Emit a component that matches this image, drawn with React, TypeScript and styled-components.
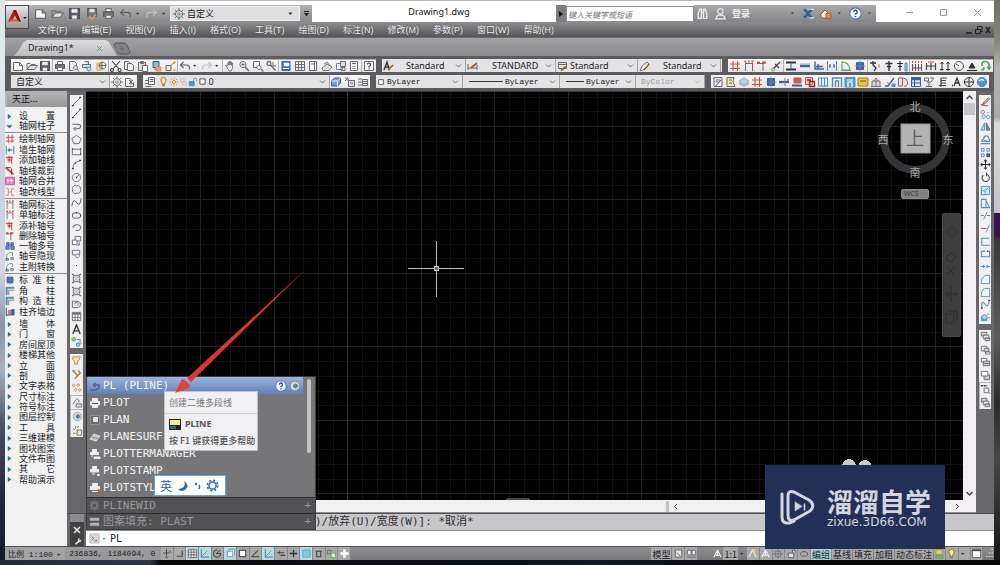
import React, { ReactNode } from "react";
import styled, { createGlobalStyle, css } from "styled-components";

const UI = `"Noto Sans", "Noto Sans CJK SC", sans-serif`;
const CJK = `"Noto Sans CJK SC", "Noto Sans", sans-serif`;
const MENU = `"Liberation Sans", "Noto Sans CJK SC", sans-serif`;
const MONO = `"DejaVu Sans Mono", "Noto Sans CJK SC", monospace`;

const GlobalStyle = createGlobalStyle`
  * { box-sizing: border-box; }
  body { margin: 0; background: #07080b; font-family: ${UI}; font-size: 9px; color: #222; overflow: hidden; }
  button, input, select { font: inherit; color: inherit; margin: 0; padding: 0; border: 0; background: none; }
  button { cursor: pointer; }
`;

/* ---------- icon drawings, all on a 12 x 12 grid ---------- */

const K = "#6a6a6e";
const B = "#4f8fb6";
const R = "#cc4f48";
const N = "#3f5f98";
const G = "#5aa65a";
const Y = "#d9a13a";

const p = (d: string, stroke = K, fill = "none", w = 1) => (
  <path key={d + stroke} d={d} stroke={stroke} fill={fill} strokeWidth={w} />
);

const drawings: Record<string, ReactNode> = {
  page: p("M1.5 2.5h6l3 3v5h-9zM7.5 2.5v3h3", "#666", "#f6f6f6"),
  open: [p("M1 9.5v-6h3l1 1h4v1.5"), p("M1 9.5l3-4h7.5l-3 4z", K, "#e2e2e4")],
  save: [p("M1.5 1.5h9v9h-9z", "#4a4a55", "#5b5f6e"), p("M3.5 2h5v3h-5zM4 8h4v2.5h-4z", "#eee", "#eee", 0.5)],
  saveas: [p("M2.5 1.5h8v7h-8z", "#555", "#777b88"), p("M4.5 2h4v2.5h-4z", "#eee", "#eee", 0.5), p("M4 8l2 3 4-4", Y, "none", 1.6)],
  print: [p("M3.5 1.5h5v3h-5z", K, "#fff"), p("M1.5 4.5h9v4h-9z", "#555", "#777"), p("M3.5 7.5h5v3h-5z", K, "#fff")],
  printPale: [p("M3.5 1.5h5v3h-5z", "#eee", "#eee"), p("M1.5 4.5h9v3.5h-9z", "#eee", "#eee"), p("M3 6.5h6", "#555"), p("M3.5 8.5h5v2h-5z", "#eee", "#eee")],
  preview: [p("M1.5 1.5h5l2 2v3M1.5 1.5v9h4"), p("M7.5 5.5a2 2 0 1 1-.1 0M9 9l2 2.5")],
  publish: [p("M3.5 1.5h4v3M1.5 4.5h8v3h-8z", K, "#ddd"), p("M8 7a2 2 0 1 1-.1 0", B, "#cfe2ee")],
  globe: [p("M2 3h4v7h-4z", Y, "#f0e2bd"), p("M7.5 2a3.5 3.5 0 1 1-.1 0M7 2v7M4 5.5h7")],
  cut: p("M2 1l7 8M10 1l-7 8M2 8.5a1.5 1.5 0 1 0 .1 0M9.5 8.5a1.5 1.5 0 1 0 .1 0", "#444", "none", 1.1),
  copy: [p("M1.5 1.5h4l2 2v6h-6z"), p("M4.5 3.5h4l2 2v5h-6z", K, "#f4f4f4")],
  paste: [p("M1.5 2.5h7v8h-7zM3.5 1.5h3v2h-3z", K, "#ddd"), p("M5.5 5.5h5v6h-5z", K, "#fff")],
  match: [p("M2 1.5h6v6h-6z", N, "#9fb4cf"), p("M5 7h5v4h-5z", Y, "#dca65a"), p("M3 9h2")],
  block: [p("M1 10.5v-5h5v5zM6 5.5l3-3", K, "#f2e8d0"), p("M8 2.5l3 0M9.5 1v3M8 10h3", Y)],
  undo: p("M4.5 2L1.5 5l3 3M2 5h5.5q3 0 3 3v1.5", "#5c5c60", "none", 1.1),
  redo: p("M7.5 2l3 3-3 3M10 5H4.5q-3 0-3 3v1.5", "#c2c2c4", "none", 1.1),
  down: p("M2 4.5h4l-2 2.5z", "#333", "#333", 0.4),
  hand: p("M3 7L1.5 5.5l1-.5L4 6V2.5h1V5 1.5h1.2V5 2h1.2v3.5V3h1.2v5l-1.5 3H5z", K, "#fff", 0.9),
  zoom: [p("M5 1.5a3 3 0 1 1-.1 0M3.5 4.5h3M5 3v3"), p("M7 7l4 4", K, "none", 1.6)],
  zoomwin: [p("M1.5 1.5h6v6h-6z"), p("M7 5.5a2 2 0 1 1-.1 0", K, "#fff"), p("M9 9l2.5 2.5", K, "none", 1.3)],
  zoomprev: [p("M4 1.5a2 2 0 1 1-.1 0M5.5 5l5 5.5", K, "none", 1.3), p("M8 2v4h3")],
  props: [p("M2 1.5h8v9h-8z", N, "#3f6da3"), p("M4 3h5v3h-5z", "#fff", "#fff", 0.6), p("M3 8.5h6", "#fff")],
  grid4: [p("M1.5 1.5h9v9h-9z", K, "#eee"), p("M4.5 1.5v9M7.5 1.5v9M1.5 4.5h9M1.5 7.5h9")],
  palette: [p("M2.5 1.5h7v9h-7z", K, "#fff"), p("M4 4h4M7.5 2v8")],
  sheet: p("M1 8l5-4 5 3-3 3.5H2zM3 4l3-2 3 4", K, "#ddd", 0.9),
  markup: [p("M1.5 3.5h6v6h-6z", B, "#fff"), p("M5.5 1.5h5v5h-5z", K, "#ddd"), p("M6 7.5h4v3H6z")],
  calc: [p("M2.5 1.5h7v9h-7z", K, "#fff"), p("M4 3.5h4", K, "none", 1.4), p("M4 6.5h4M4 8.5h4", K, "none", 0.7)],
  help: [p("M1.5 1.5h9v9h-9z", K, "#fff"), p("M4.5 4.5q0-1.5 1.5-1.5t1.5 1.5-1.5 2V7.5M6 8.5v1", "#333", "none", 1.2)],
  textstyle: [p("M1 10l3-8 2.5 8M2 7h4", "#333", "none", 1.4), p("M5 10l5-5", "#8a6428", "none", 1.7)],
  dimstyle: [p("M1 10V4M1 8h9M10 10V5", K), p("M4 8l6-5", "#a5562c", "none", 1.7)],
  tablestyle: [p("M1.5 2.5h8v6h-8zM1.5 4.5h8"), p("M4 10.5l5-4", "#8a6428", "none", 1.8)],
  leader: [p("M1 11l2-5 5-4 2 2-4 5z", K, "#eee", 0.9), p("M5 10l5-6", "#8a6428", "none", 1.4)],
  gear: [p("M6 2.5a3.5 3.5 0 1 1-.1 0M6 0v2.5M6 9.5V12M0 6h2.5M9.5 6H12M1.8 1.8l1.7 1.7M8.5 8.5l1.7 1.7M1.8 10.2l1.7-1.7M8.5 3.5l1.7-1.7"), p("M6 4.8a1.2 1.2 0 1 1-.1 0")],
  gearbox: [p("M1.5 2.5h5M1.5 2.5v8h8v-4", K), p("M5 4l4 4M9 4l-4 4M7 3v6", K)],
  layers: [p("M4.5 1.5h6v7h-6zM5.5 3.5h4M5.5 5.5h4", K, "#fff"), p("M1 4.5h3M1 7.5h3M1.5 10.5h6", K)],
  bulb: [p("M6 1.5a3 3 0 0 1 1.5 5.5v2h-3V7A3 3 0 0 1 6 1.5z", "#8a7430", "#ffe98a"), p("M4.5 10.5h3")],
  sun: [p("M6 4a2 2 0 1 1-.1 0", "#a8862b", "#ffe27a"), p("M6 1v1.5M6 9.5V11M1 6h1.5M9.5 6H11M2.5 2.5l1 1M8.5 8.5l1 1M2.5 9.5l1-1M8.5 3.5l1-1", "#a8862b")],
  vp: p("M2 2.5h5v4h-5zM5 6.5h5v4h-5z", "#bbb"),
  lock: [p("M1.5 5.5h6v5h-6z", B, "#4e93b8"), p("M6.5 5V3.5q0-2 2-2t2 2V5", B)],
  box: p("M2.5 2.5h7v7h-7z", "#222", "#fff"),
  stack: [p("M1.5 5l3-3h6v5l-3 3h-6z", N, "#7d9fc6"), p("M1.5 5h6v5M7.5 5l3-3", "#e7eef6")],
  stack2: [p("M4.5 4.5h6v6h-6z", K, "#ddd"), p("M1 2h3v3M4 2L1 5M6 7h3")],
  stack3: [p("M5.5 3.5h5v6h-5zM6 5.5h4M6 7.5h4"), p("M1 3h4M1 6h4M1 9h4")],
  hash: p("M4 1v10M8.5 1v10M1 4h10M1 8.5h10", R, "none", 1.1),
  axis1: [p("M2.5 3v8M9.5 3v8M2.5 3.5h7"), p("M1.5 1.5h2M8.5 1.5h2M5 1.5h1.5", R, "none", 1.8)],
  axis2: [p("M1 3.5h8M7 3.5V11"), p("M1 2.5h3M6 2.5h4", R, "none", 2)],
  trim: [p("M10 2L3 9M5 4l4 4", "#444", "none", 1.2), p("M3 8a1.5 1.5 0 1 1-.1 0", G, "#bfe0bf")],
  ibeam: [p("M1 2.5h10M1 9.5h10", "#333", "none", 1.8), p("M6 3v6", B, "none", 1.4)],
  wall: [p("M1 6h10", N, "none", 2.4), p("M1 4h10", "#aaa")],
  stairs: p("M2 1.5V9h9M3 6.5h7M5 4v5", N, "none", 1.4),
  doors: [p("M1.5 1v10M10.5 1v10", B), p("M3 6h2M7 6h2M4 4v4M8 4v4", N)],
  arcdoor: [p("M2 10V2q7 0 8 8z", G, "none", 1.1), p("M1 10.5h10", "#888")],
  column: [p("M2.5 2.5h7v7h-7z", N, "#4866a4"), p("M6 .5v11M.5 6h11", "#6f88b8", "none", 0.8)],
  dim1: [p("M1 3h6M4 1v4l3 3-2 3", "#333", "none", 1.3), p("M10 4v4", Y, "none", 1.3)],
  dim2: p("M6 1v10M2.5 3.5h7M4 6.5h4", "#333", "none", 1.4),
  dim3: [p("M4 1v10M1 3.5h6M2 6.5h4", "#333", "none", 1.2), p("M9 3v8h2V3z", B, "#a5cbe0")],
  rail: [p("M1.5 4v7M4.5 4v7M7.5 4v7M10.5 4v7M1 8h10", "#555"), p("M1.5 1v2M4.5 1v2M7.5 1v2M10.5 1v2", R, "none", 1.2)],
  arrows: [p("M1.5 3v7M6 3v7M10.5 3v7M1 6h10", "#444", "none", 1.2), p("M3 2h6", R)],
  arrows2: p("M3 2v9M9 2v9M1.5 4L3 2l1.5 2M7.5 4L9 2l1.5 2M1 9.5h3.5M7 9.5h4", "#333"),
  dial: p("M6 1.5a4.5 4.5 0 1 1-.1 0M6 6L3 4", "#555"),
  elev: [p("M3 8l3-5 3 5z", "#333", "#333"), p("M1 10.5h10", "#333", "none", 1.2)],
  loop: [p("M2 6V4q0-2.5 3-2.5t4 2.5v3", G, "none", 1.7), p("M7 7h4L9 10zM1 10h3V7", G, G)],
  doc: [p("M2 1.5h8v9h-8z", K, "#eef"), p("M3.5 4h5M3.5 6h3M3 11l6-7", K)],
  docy: [p("M2 1.5h7L8 6l2 4.5H2z", K, "#f5e7b4"), p("M4 4h3M4 7h3")],
  drum: [p("M1 5l5-3 5 3-5 3z", "#9ab4c6", "#c2d4e0"), p("M1 7l5 3 5-3", "#9aacb8", "none", 1.5)],
  tee: [p("M1 6h10", N, "none", 2.2), p("M7 2v8", B), p("M9 4h2", R, "none", 1.5)],
  redstack: [p("M3 2h7v5H3z", R, "#cf5c55"), p("M1 9.5h10", N, "none", 2)],
  redwin: [p("M1.5 1.5h7v7h-7z", R, "#f1c9c6"), p("M5.5 5.5h5v5h-5zM3 4h4", "#8c2620", "none", 1.3)],
  bluewin: p("M1.5 2v8.5M4.5 2v8.5M7.5 2v8.5M10.5 2v8.5M1 2h10M1 10h10", B, "#cfe4f0"),
  portal: p("M1.5 11V2h9v9M4.5 11V5h3v6", B, "none", 1.3),
  bluehouse: [p("M1 1.5h10v9.5H1z", B, "#57a5d0"), p("M4 11V6h4v5M3 4h6", "#fff", "none", 1.2)],
  yellow: [p("M1 2h10v8H1z", "#9a7c22", "#f0c745"), p("M3 5h6", "#6b571a")],
  gate: p("M1 10.5h10M2 10V5h8v5M4 5l2-3 2 3M6 5v5", "#7a6a66", "#ddd"),
  slope: [p("M1 10h3l6-8", N, "none", 1.5), p("M8 8h3v2.5H8z", B, B), p("M3 6l2 2", Y, "none", 1.5)],
  book: p("M1.5 2h4v8h-4zM6 2q4 0 4.5 4T7 10.5", K, "#f3dede"),
  table: [p("M1.5 1.5h9v9h-9z", N, "#d6e4f2"), p("M1.5 3h9", N, "none", 2.5), p("M4.5 3v7M1.5 7h9", N)],
  cup: [p("M1.5 2h4v3h-4zM7 2h4l-3 4H4M6 6v5M3 10.5h6", K)],
  efont: p("M4 11V2h6M4 4.5h5M4 7h5M2 9.5h7", "#444", "none", 1.2),
  adot: p("M2 9.5h1M4 10l3-8 3 8M5 7h4", "#333", "none", 1.3),
  target: p("M6 1.5a4.5 4.5 0 1 1-.1 0M6 1v10M1 6h10", "#333"),
  ball: [p("M6 1.5a4.5 4.5 0 1 1-.1 0", "#3b7cc0", "#4b94d9"), p("M3 5q3-3 5 0", "#fff", "none", 1.3)],
  line: [p("M2 10l8-8"), p("M1 10.5h2M9 1.5h2", "#333", "none", 1.2)],
  xline: [p("M2 10l8-8"), p("M1 10.5h2M5.5 6h1M9 1.5h2", "#333", "none", 1.6)],
  pline: [p("M1.5 3.5h6q3 0 3 2.5T7 8.5H4", K, "none", 1.1), p("M5 6.5L3 8.5l2 2", B, "none", 1.2)],
  plinePale: p("M1 10h5q5-1 4-5H5M6.5 3L4.5 5l2 2", "#4a628c", "none", 1.4),
  poly: p("M6 1.5l5 3.5-2 5.5H3L1 5z"),
  rect: [p("M1.5 3.5h9v6h-9z"), p("M1 3h1M10 9h1M10 3h1", "#333", "none", 1.6)],
  arc: [p("M2 11q0-8 8-9"), p("M1 10.5h2M4 4.5h1.5M9 1.5h2", "#333", "none", 1.6)],
  circle: [p("M6 1.5a4.5 4.5 0 1 1-.1 0M6 6l3-3"), p("M5.5 6h1", "#333", "none", 1.4)],
  cloud: p("M3 2q2-1.5 3 0 2-1.5 3.5.5Q11 4 10 5.5 11.5 7 10 9q-1.5 2-3.5.8Q4 11.5 2.5 9.5.5 8 2 6 .5 4 3 2z"),
  spline: p("M1 10q1-9 5-4t5-4.5", K, "none", 1.1),
  ellipse: [p("M6 3q4.5 0 4.5 3T6 9 1.5 6 6 3z", K, "none", 1.1), p("M5.5 3h1M10 6h1", "#333", "none", 1.4)],
  earc: p("M2 6Q3 2.5 7 3t3.5 3.5Q10 10 5 9", K, "none", 1.1),
  insert: [p("M4.5 1.5h6v5h-6z"), p("M1.5 5.5h5v5h-5z", K, "#fff"), p("M9 8v3H7", N)],
  mkblock: [p("M1.5 2.5h8v5h-8z"), p("M7 6.5a2 2 0 1 1-.1 0", K, "#fff")],
  point: p("M5.5 6h1", "#222", "none", 1.2),
  hatch: [p("M2.5 2.5h7v7h-7z", K, "#e0e0e3"), p("M1 1.5h2M9 1.5h2M1 10.5h2M9 10.5h2", K, "none", 1.6), p("M3 9l6-6M3 6l3-3M6 9l3-3", "#a2a2a6")],
  region: p("M1.5 3.5h5q4 0 4 3.5T7 10.5H1.5zM4 7a2 2 0 1 1 3 1.5"),
  tbl: [p("M1.5 1.5h9v9h-9z", K, "#fff"), p("M1.5 3h9", K, "none", 1.8), p("M4.5 3v8M7.5 3v8M1.5 7h9")],
  bigA: p("M2 11L6 1l4 10M3.5 7.5h5", "#333", "none", 1.5),
  add: [p("M3 1.5a2 2 0 1 1-.1 0", G, "#8fce8f"), p("M6 4h4v3M8 7l2 2 2-2", K), p("M6 8h3v3H6z", B, "#a9cfe6")],
  flash: [p("M2 2h6q3 3-1 5v3H4V7Q1 5 2 2z", "#b88440", "#fbe3a5"), p("M9 1l2 2", R)],
  flash2: [p("M2 2l6 6M8 1.5l2 3-6 6", "#b07a30", "none", 1.5), p("M1 2h4", B)],
  dots: p("M3 2.5a1.3 1.3 0 1 1-.1 0M8 2a1.3 1.3 0 1 1-.1 0M5 7a1.3 1.3 0 1 1-.1 0M9.5 7.5a1.3 1.3 0 1 1-.1 0", "#b87a3a"),
  lockcurve: [p("M1 8q4-8 6-5M7.5 3v3"), p("M4.5 7.5h6v3.5h-6z", K, "#ddd")],
  eye: [p("M6 1.5a4.5 4.5 0 1 1-.1 0", "#999", "#ddd"), p("M6.5 4a2 2 0 1 1-.1 0", "#4f7b8e", "#5b8c9f")],
  rays: [p("M5.5 5.5h5v5.5h-5z", K, "#f6f0c0"), p("M4 1v3M1 4l2 1M7 1L6 3.5M1 9h3")],
  pen: [p("M2 10.5h7M3 8l6-6 1.5 1L6 8z", K, "#e7b05d"), p("M1 9.5h4", R, "none", 1.4)],
  copyobj: [p("M3 1.5a1.8 1.8 0 1 1-.1 0M8 4h1", K), p("M4 6.5a1.8 1.8 0 1 1-.1 0M9 7a1.8 1.8 0 1 1-.1 0", B)],
  mirror: [p("M5 2v8H1z", B, "#b8d6e6"), p("M7 2v8h4z", K, "#5f97b6")],
  offset: p("M1 10.5h10M2 8q0-2 2-2.5Q4 2 7 2t2.5 3.5Q11 6 10.5 8zM4.5 7.5h3", B, "none", 1.3),
  array: [p("M1.5 1.5h3v3h-3zM7.5 1.5h3v3h-3zM1.5 7.5h3v3h-3z", B), p("M7.5 7.5h3v3h-3z", "#333", B)],
  move: p("M6 1v10M1 6h10M4.5 2.5L6 1l1.5 1.5M4.5 9.5L6 11l1.5-1.5M2.5 4.5L1 6l1.5 1.5M9.5 4.5L11 6 9.5 7.5", "#333", "none", 1.1),
  rotate: p("M7 2.5A4 4 0 1 1 3.5 3.5M7 .5v4", "#444", "none", 1.1),
  scale: [p("M1.5 1.5h9v9h-9z", B, "#cfe6f2"), p("M1.5 6.5h4v4h-4z", B, "#fff"), p("M6 6l3-3", K)],
  stretch: p("M1.5 1.5h5v9h-5zM6.5 3l4 7.5h-4M8 10h3", B, "#eaf4f9", 1.1),
  trimline: [p("M1 6h3M7.5 6H11", K), p("M4 10l4-8", B)],
  extend: [p("M1 6h6", K), p("M7 10l3-8", B)],
  brk: p("M10 2.5H2V10h8.5", B, "none", 1.1),
  brk2: [p("M4 3.5H1.5v6h9v-6H8", B, "none", 1.1), p("M4 3.5h1M7.5 3.5h1", "#333", "none", 1.6)],
  join: p("M1 6h4M7 6h4M3.5 4.5L5 6 3.5 7.5M8.5 4.5L7 6l1.5 1.5", B, "none", 1.1),
  chamfer: p("M1.5 10.5V6l4-4.5h5v9z", B, "#eef6fa"),
  fillet: p("M1.5 10.5V8q0-6.5 6-6.5h3v9z", B, "#eef6fa"),
  blend: [p("M2 10V5q1-3 4 1t4-4", B, "none", 1.2), p("M1 10h2M9 1.5h2", "#333", "none", 1.2)],
  explode: [p("M1.5 5.5h6v4h-6z", B, "#6ea9c8"), p("M5 3a3 2.5 0 1 1-.1 0M8 3l2-1M9 6h2", B, "#b7d5e5")],
  order1: [p("M1.5 1.5h6v4h-6z", K, "#ccc"), p("M3.5 4.5h6v4h-6zM5.5 7.5h5v3h-5z", K, "#eee")],
  order2: [p("M1.5 2.5h6v5h-6zM6 8.5h5v2.5H6z", K, "#fff"), p("M4.5 4.5h5v4h-5z", K, "#ccc")],
  order3: [p("M1.5 1.5h6v4h-6z", K, "#fff"), p("M3.5 4.5h7v5h-7z", K, "#ccc"), p("M4 7h6")],
  order4: [p("M4.5 5.5h6v5h-6z", K, "#ccc"), p("M1.5 1.5h7v5h-7z", K, "#fff")],
  order5: [p("M1 2h2M4 2h2M7 2h1", "#333", "none", 1.6), p("M4.5 4.5h5v5h-5zM10 10h1.5", K)],
  person: [p("M6 1.5a2.5 2.5 0 1 1-.1 0", "#eee", "none", 1.1), p("M1.5 11q1-3 3-3.5h3q2 .5 3 3.5z", "#eee", "none", 1.1)],
  binoc: p("M2 10.5V6l1.5-4h1.5v8.5zM7 10.5V2h1.5L10 6v4.5zM5 5h2", "#eee", "none", 1.2),
  exchange: [p("M2 2l7 8M9 2L2 10", "#2d5ca0", "none", 2.2), p("M7 2h4M7 10h4", "#eef", "none", 1)],
  cloudlock: [p("M1 10V6l4-4 3 3v5z", "#8a5a30", "#eee"), p("M6 5.5h5v5H6z", "#b55c1e", "#ea8f3a")],
  question: [p("M6 .8a5.2 5.2 0 1 1-.1 0", "#5578a8", "#f4f8fc"), p("M4.5 4.7q0-1.7 1.5-1.7t1.5 1.5-1.5 2V7.2M6 8.2v1.3", "#2c5284", "none", 1.3)],
  wcut: [p("M1 2l9 8", R, "none", 2.4), p("M1 2h6M8 3v7", "#333", "none", 1.1)],
  merge: [p("M.5 1.5h11v9H.5z", "#d04b98", "#e07ab5"), p("M3.5 3v6M7.5 3v6M2 5.5h8", "#fff")],
  retype: p("M1 2h3v8H1M11 2H8v8h3M4 6h4", "#c98480", "none", 1.1),
  walls: [p("M1.5 1v10M10.5 1v10", B, "none", 1.2), p("M3 6h6M5 4v4", "#333")],
  addaxis: [p("M1 3h8M3 6h5", R, "none", 1.6), p("M5 1v8M8 2v9", "#8c4240")],
  blues: p("M2 2h3v3H2zM7 2h3v3H7zM1 6h4v4H1zM7 6h4v4H7zM3 5h6", N, "#6a8fd0"),
  node: [p("M2 11V5l3-3h4v4", G, "none", 1.1), p("M1 9h3v2H1zM7 8h3v2H7z", N)],
  corner: [p("M2 11V2h9", B, "none", 2.4), p("M4.5 11V5h6.5", K)],
  align: [p("M1.5 1v10M1 9.5h10", N, "none", 1.4), p("M4 4h3v4H4z", R, "#e09090"), p("M8 3h3v6H8z", N, N)],
  tri: p("M4 3l4 3-4 3z", "#1f6f96", "#1f6f96", 0.5),
  tridown: p("M2.5 4.5h7L6 8z", "#1f6f96", "#1f6f96", 0.5),
  surf: [p("M1 8l4-5 6 2-4 5z", "#ddd", "#c4c4c6"), p("M3 6l6 2", "#888")],
  plan: [p("M1.5 1.5h9v9h-9z", "#8e8e90", "#6b6b6d"), p("M4.5 3.5h4v4h-4z", "#e6e6e6", "#e6e6e6")],
  plotmgr: [p("M3.5 1.5h4v2h-4zM1.5 4.5h8v2h-8z", "#eee", "#eee"), p("M5 9h6v1.5H5zM2 8h2", "#eee", "#eee")],
  stamp: [p("M3.5 1.5h4v2h-4zM1.5 4.5h8v2.5h-8z", "#eee", "#eee"), p("M8.5 9.5h2v1h-2zM3 9h3", "#eee", "#eee")],
  stylep: [p("M3.5 1.5h5v2h-5zM1.5 4.5h9v3h-9zM3 9.5h6", "#eee", "#eee"), p("M9 7l2 3", "#d2691e", "none", 1.8)],
  gearPale: p("M6 3a3 3 0 1 1-.1 0M6 .5v2M6 9.5v2M.5 6h2M9.5 6h2M2 2l1.5 1.5M8.5 8.5L10 10M2 10l1.5-1.5M8.5 3.5L10 2", "#7b7b7d", "none", 1.6),
  bars: p("M1 3.5h10M1 9h10", "#b4b4b6", "none", 3.4),
  snap: p("M6 1v8M2.5 5.5h7M4 9l2 2 2-2M9 3l2 2", "#444"),
  ortho: p("M3 9h6V3", "#444", "none", 1.1),
  polar: p("M6 2a4 4 0 1 0 3.5 4H5l4-4", "#444", "none", 1.1),
  osnap: p("M2.5 3.5h6v6h-6zM4 1.5h6.5V8", B, "#fff"),
  angle: p("M9 2L2 9.5h8", "#444", "none", 1.1),
  ucs: [p("M2.5 1v9H11", B, "none", 1.2), p("M3 9l6-6", G)],
  plus: p("M6 2v8M2 6h8", "#333", "none", 1.4),
  lwt: [p("M2 5h8", "#444", "none", 1), p("M6 8h5", "#444", "none", 1.6), p("M5 3v4", "#444")],
  sq: p("M4 3.5h4.5v6H4zM3 3.5h6.5", "#444", "none", 1.1),
  fillsq: p("M2 2h8v8H2z", "#58a9c9", "#85c9e2"),
  sel: [p("M1.5 2.5h4v4h-4z"), p("M5.5 5.5h5v5h-5z", G, "#d9ecd9")],
  cross: p("M6 1.5v9M1.5 6h9", "#fff", "none", 2.6),
  anno: p("M6 2L2 10M6 2l4 8M6 2v6M4 8h4", "#eee", "none", 1.2),
  annoY: [p("M6 2L2 10M6 2l4 8", "#eee", "none", 1.2), p("M8 1v5", "#f0d060", "none", 2)],
  layoutA: [p("M2.5 2h7v8h-7z", K, "#ddd"), p("M4 5l4 4", K)],
  layoutB: p("M1.5 2.5h4v5h-4zM6.5 2.5h4v5h-4zM1 10h10", K, "#eee"),
  unlock: p("M2.5 5.5h6v5h-6zM7 5V2.5h3V5", "#555", "#ddd"),
  flag: [p("M2 2h7v5H2z", "#b8902c", "#eacb64"), p("M2 8h8v3H2z", G, "#6fae9e")],
  win: [p("M1.5 1.5h9v9h-9z", "#555", "#fff"), p("M1.5 2.5h9", "#555", "none", 2)],
  resize: p("M10 2v1M10 6v1M7 6v1M10 10v1M7 10v1M4 10v1", "#eee", "none", 1.6),
  wrench: p("M3 9l4-4q-1-3 2-3l-1 2 1 1 2-1q0 3-3 2.5L4.5 10z", "#eee", "#eee", 0.5),
  prompt: [p("M1 1h10v10H1z", "#bbb", "#d6d6d8"), p("M3 4l2 2-2 2M6 8.5h3", "#666")],
};

const Svg = styled.svg<{ $s: number }>`
  display: block;
  flex: none;
  width: ${(q) => q.$s}px;
  height: ${(q) => q.$s}px;
`;

const Icon = ({ name, s = 12 }: { name: string; s?: number }) => (
  <Svg $s={s} viewBox="0 0 12 12" aria-hidden="true">
    {drawings[name]}
  </Svg>
);

/* ---------- shell ---------- */

const Desktop = styled.div`
  min-height: 100vh;
  display: grid;
  grid-template: 1fr 5px / 5px minmax(0, 1fr) 6px;
  background: #08090c;
`;
const LeftEdge = styled.div`
  background: linear-gradient(#d9e6ea 0, #e2ecee 12%, #c9cfdb 30%, #d2d8e4 48%, #8b93a3 58%, #a9b0be 66%, #4b5262 76%, #262b3b 88%, #151926 100%);
`;
const RightEdge = styled.div`
  background: linear-gradient(#6d715f 0, #8a8a78 8%, #b5b3b0 12%, #aaa9ad 21%, #dcdce0 22%, #c2c2c8 38%, #3d1050 38%, #3d1050 42%, #3a3a3e 43%, #5c5c60 60%, #2b2b2f 72%, #47474b 82%, #17171a 100%);
`;
const BottomEdge = styled.div`
  grid-column: 1 / -1;
  background: linear-gradient(90deg, #23283a 0, #30364a 15%, #08090c 16%, #0c1018 50%, #101728 60%, #0a0a0c 75%, #050506 100%);
`;
const Window = styled.div`
  position: relative;
  display: flex;
  flex-direction: column;
  min-width: 0;
  background: #666668;
  border-top: 1px solid #b5b9b6;
`;

/* ---------- title and menu ---------- */

const Head = styled.header`
  display: grid;
  grid-template-columns: 24px minmax(0, 1fr);
  grid-template-rows: 21px 15px;
  background: linear-gradient(#fff 0, #fff 21px, #8d8d8f 21px, #565658 100%);
`;
const LogoButton = styled.button`
  grid-row: 1 / 3;
  height: 24px;
  margin-top: 4px;
  display: flex;
  align-items: center;
  justify-content: center;
  border: 1px solid #4b4b4d;
  background: linear-gradient(#e6e6e8, #97979a);
`;
const TitleRow = styled.div`
  display: flex;
  align-items: flex-end;
`;
const QuickAccess = styled.div`
  width: 283px;
  height: 17px;
  display: flex;
  align-items: center;
  padding-left: 3px;
  background: linear-gradient(#b2b2b4, #88888a);
`;
const QuickButton = styled.button<{ $w?: number }>`
  width: ${(q) => q.$w ?? 17}px;
  flex: none;
  height: 16px;
  display: grid;
  place-items: center;
`;
const Workspace = styled.label`
  flex: 1;
  min-width: 0;
  height: 15px;
  margin-left: 1px;
  padding: 0 2px;
  display: flex;
  align-items: center;
  background: #dedee0;
  border: 1px solid #efeff0;
`;
const Choice = styled.select<{ $indent?: number; $mono?: boolean; $dim?: boolean }>`
  appearance: none;
  flex: 1;
  min-width: 0;
  height: 100%;
  padding-left: ${(q) => q.$indent ?? 2}px;
  font-family: ${(q) => (q.$mono ? `"Liberation Mono", monospace` : UI)};
  font-size: ${(q) => (q.$mono ? 8 : 9)}px;
  color: ${(q) => (q.$dim ? "#9a9a9c" : "#222")};
  opacity: 1;
  outline: 0;
`;
const Title = styled.h1`
  flex: 1;
  margin: 0;
  padding-left: 10px;
  text-align: center;
  font-size: 9px;
  line-height: 20px;
  font-weight: 400;
  color: #111;
`;
const SearchArrow = styled.button`
  width: 10px;
  height: 17px;
  display: grid;
  place-items: center;
  background: #7c7c7e;
`;
const Search = styled.input`
  width: 128px;
  height: 16px;
  padding-left: 1px;
  background: #fff;
  border: 1px solid #8c8c8e;
  font: italic 8px ${CJK};
  &::placeholder { color: #77777a; opacity: 1; }
`;
const Account = styled.div`
  width: 182px;
  height: 17px;
  display: flex;
  align-items: center;
  gap: 5px;
  padding: 0 2px;
  background: linear-gradient(#a9a9ab, #868688);
`;
const Login = styled.button`
  flex: none;
  white-space: nowrap;
  color: #ececee;
  font: 700 9px ${CJK};
  margin-right: 35px;
`;
const WindowButtons = styled.div`
  width: 118px;
  height: 20px;
  display: flex;
  align-items: center;
  justify-content: space-between;
  padding: 0 12px 0 29px;
`;
const PlainButton = styled.button`
  display: grid;
  place-items: center;
`;
const MenuRow = styled.nav`
  display: flex;
  align-items: center;
  gap: 14px;
  padding: 1px 2px 0 9px;
`;
const MenuLink = styled.button`
  color: #f2f2f3;
  font: 9px/12px ${MENU};
  text-shadow: 0 0 1px #333;
  white-space: nowrap;
`;
const ChildControls = styled.div`
  margin-left: auto;
  display: flex;
`;
const TabRow = styled.div`
  height: 19px;
  display: flex;
  align-items: flex-end;
  padding-left: 9px;
  background: linear-gradient(#a2a2a4, #8b8b8d);
  border-top: 1px solid #6b6b6d;
`;
const Tab = styled.button`
  width: 103px;
  height: 16px;
  display: flex;
  align-items: center;
  justify-content: space-between;
  padding: 0 14px;
  clip-path: polygon(0 100%, 4% 70%, 9% 15%, 13% 0, 89% 0, 92% 12%, 100% 100%);
  background: linear-gradient(#dcdcde, #bcbcbe);
  color: #222;
  line-height: 14px;
`;
const NewTab = styled.button`
  height: 16px;
  margin-left: -4px;
  display: grid;
  place-items: center;
`;

/* ---------- toolbars ---------- */

const Bars = styled.div`
  padding: 3px 0 3px 6px;
  display: grid;
  gap: 3px;
  background: #5c5c5e;
`;
const BarRow = styled.div`
  display: flex;
  gap: 6px;
  height: 13px;
`;
const Panel = styled.div<{ $w: number }>`
  width: ${(q) => q.$w}px;
  flex: none;
  display: flex;
  background: linear-gradient(#f8f8f9, #e6e6e8);
`;
const Tools = styled.div<{ $n: number; $col?: boolean }>`
  flex: ${(q) => q.$n} 0 0;
  min-width: 0;
  min-height: 0;
  display: flex;
  flex-direction: ${(q) => (q.$col ? "column" : "row")};
  & + & {
    ${(q) => (q.$col ? "border-top" : "border-left")}: 1px solid #b4b4b6;
  }
`;
const Tool = styled.button<{ $slim?: boolean }>`
  flex: ${(q) => (q.$slim ? 0.6 : 1)} 0 0;
  min-width: 0;
  min-height: 0;
  display: flex;
  align-items: center;
  justify-content: center;
`;
const Field = styled.label<{ $w: number }>`
  width: ${(q) => q.$w}px;
  display: flex;
  align-items: center;
  padding: 0 3px 0 1px;
  background: #e3e3e6;
  border-right: 1px solid #a6a6a9;
`;
const Rule = styled.span<{ $w: number }>`
  width: ${(q) => q.$w}px;
  height: 1px;
  margin-left: 5px;
  background: #333;
`;

const ToolSet = ({ names, col }: { names: string; col?: boolean }) => (
  <>
    {names.split("|").map((g) => {
      const items = g.trim().split(" ");
      const n = items.reduce((a, x) => a + (x === "down" ? 0.6 : 1), 0);
      return (
        <Tools key={g} $n={n} $col={col}>
          {items.map((x, i) => (
            <Tool key={i} $slim={x === "down"} aria-label={x} type="button">
              <Icon name={x} s={x === "down" ? 8 : col ? 11 : 12} />
            </Tool>
          ))}
        </Tools>
      );
    })}
  </>
);

const Chevron = ({ c = "#777" }: { c?: string }) => (
  <Svg $s={7} viewBox="0 0 7 7" aria-hidden="true">
    <path d="M1 2.5l2.5 2.5L6 2.5" stroke={c} fill="none" />
  </Svg>
);

/* ---------- workspace ---------- */

const Body = styled.div`
  flex: 1;
  min-height: 0;
  display: flex;
`;
const SidePalette = styled.aside`
  width: 62px;
  flex: none;
  display: flex;
  flex-direction: column;
  background: #f1f1f2;
`;
const PaletteTitle = styled.h2`
  margin: 0 0 3px;
  height: 16px;
  padding-left: 5px;
  border-left: 2px solid #b5b5b7;
  background: linear-gradient(#b6b6b8, #98989a);
  font: 9px/16px ${CJK};
  color: #111;
`;
const PaletteGroup = styled.ul<{ $h: number; $rule?: boolean }>`
  height: ${(q) => q.$h}px;
  margin: 0;
  padding: 1px 0 1px;
  list-style: none;
  display: grid;
  grid-auto-rows: 1fr;
  ${(q) => q.$rule && css`border-bottom: 1px solid #8e8e90;`}
`;
const PaletteItem = styled.button`
  display: grid;
  grid-template-columns: 12px 36px;
  gap: 2px;
  width: 100%;
  height: 10px;
  align-items: center;
  font: 9px/10px ${CJK};
  color: #222;
`;
const Spread = styled.span`
  text-align: justify;
  text-align-last: justify;
  white-space: nowrap;
`;
const Gutter = styled.div<{ $w: number }>`
  width: ${(q) => q.$w}px;
  flex: none;
  padding: 4px 3px 0 3px;
  display: flex;
  flex-direction: column;
  gap: 6px;
  background: #68686a;
`;
const ToolColumn = styled.div<{ $h: number }>`
  height: ${(q) => q.$h}px;
  display: flex;
  flex-direction: column;
  background: #f0f0f2;
`;
const Right = styled.div`
  flex: 1;
  min-width: 0;
  display: flex;
  flex-direction: column;
`;
const Upper = styled.div`
  flex: 1;
  min-height: 0;
  display: flex;
`;
const CanvasArea = styled.main`
  flex: 1;
  min-width: 0;
  display: grid;
  grid-template: minmax(0, 1fr) 13px / minmax(0, 1fr) 13px;
`;
const Drawing = styled.div`
  position: relative;
  overflow: hidden;
  background: #000;
  border-top: 1px solid #3a3a3c;
`;
const Grid = styled.svg`
  position: absolute;
  inset: 0;
  width: 100%;
  height: 100%;
`;
const VScroll = styled.div`
  display: flex;
  flex-direction: column;
  align-items: center;
  justify-content: space-between;
  padding: 3px 0;
  background: #f1eff2;
`;
const Thumb = styled.span`
  width: 11px;
  height: 12px;
  margin: 2px 0 auto;
  background: #c6c5c7;
`;
const HScroll = styled.div`
  grid-column: 1 / -1;
  display: flex;
  align-items: center;
  padding: 0 15px 0 580px;
  background: #f1eff2;
  border-bottom: 1px solid #909092;
`;
const Splitter = styled.span`
  width: 3px;
  height: 11px;
  margin-right: 4px;
  background: #c3c3c5;
`;
const Compass = styled.div`
  position: absolute;
  top: 9px;
  right: 8px;
  width: 80px;
  height: 112px;
`;
const Ring = styled.svg`
  display: block;
  width: 80px;
  height: 80px;
  overflow: visible;
`;
const WcsButton = styled.button`
  position: absolute;
  left: 26px;
  top: 88px;
  width: 28px;
  height: 10px;
  border-radius: 2px;
  border: 1px solid #8c8c8e;
  background: #808083;
  font: 7px/8px ${UI};
  color: #3c3c3e;
  text-align: left;
  padding-left: 2px;
`;
const NavBar = styled.div`
  position: absolute;
  top: 121px;
  right: 2px;
  width: 19px;
  height: 124px;
  border-radius: 2px;
  border: 1px solid #4a4a4b;
  background: #3d3d3e;
`;
const Lump = styled.span`
  position: absolute;
  right: 91px;
  bottom: 22px;
  width: 30px;
  height: 20px;
  background: radial-gradient(circle 7px at 7px 8px, #c9c9c9 95%, transparent), radial-gradient(circle 7px at 23px 9px, #c9c9c9 95%, transparent);
`;

/* ---------- command line ---------- */

const Command = styled.div`
  display: grid;
  grid-template: 17px 15px / 19px minmax(0, 1fr);
  border-top: 1px solid #4c4c4e;
`;
const CommandHandle = styled.div`
  grid-row: 1 / 3;
  display: flex;
  flex-direction: column;
  align-items: center;
  justify-content: flex-end;
  gap: 3px;
  border-left: 3px solid #68686a;
  border-right: 2px solid #68686a;
  background: linear-gradient(#8c8c8e 0, #8c8c8e 8px, #414143 8px);
`;
const History = styled.output`
  padding-left: 229px;
  font: 11px/16px ${MONO};
  color: #2e2e30;
  background: #c8c7c9;
  border-bottom: 1px solid #8e8e90;
  white-space: pre;
`;
const Prompt = styled.label`
  display: flex;
  align-items: center;
  gap: 2px;
  padding-left: 3px;
  background: #fff;
`;
const PromptInput = styled.input`
  flex: 1;
  font: 10px/14px ${MONO};
  color: #222;
  outline: 0;
`;

/* ---------- status bar ---------- */

const Status = styled.footer`
  height: 14px;
  display: flex;
  align-items: center;
  font: 9px/14px ${CJK};
  color: #222;
  background: linear-gradient(#8e8e90, #79797b);
  border-top: 1px solid #4e4e50;
`;
const ScaleButton = styled.button`
  width: 60px;
  flex: none;
  height: 13px;
  display: flex;
  align-items: center;
  justify-content: space-between;
  padding: 2px 1px 0 3px;
  background: #a2a2a4;
  font: 8px/10px "Liberation Mono", ${CJK};
  white-space: nowrap;
`;
const Coords = styled.output`
  width: 96px;
  flex: none;
  padding-left: 4px;
  background: #99999b;
  font: 8px/13px "Liberation Mono", monospace;
  white-space: pre;
`;
const Toggles = styled.div<{ $w: number }>`
  width: ${(q) => q.$w}px;
  flex: none;
  height: 13px;
  display: flex;
`;
const Toggle = styled.button<{ $on?: boolean }>`
  flex: 1 0 0;
  min-width: 0;
  display: grid;
  place-items: center;
  background: ${(q) => (q.$on ? "#b9dbe6" : "#a9a9ab")};
  border-right: 1px solid #88888a;
`;
const WordButton = styled.button<{ $on?: boolean }>`
  height: 13px;
  padding: 3px 1px 0;
  font: 9px/10px ${CJK};
  margin-right: 1px;
  background: ${(q) => (q.$on ? "#a8d3de" : "#a9a9ab")};
  white-space: nowrap;
`;
const Spacer = styled.span`
  flex: 1;
`;

/* ---------- floating pieces ---------- */

const Suggest = styled.div`
  position: absolute;
  left: 81px;
  bottom: 30px;
  width: 230px;
  border: 1px solid #3b3b3d;
  background: #767678;
`;
const SuggestList = styled.ul`
  margin: 0;
  padding: 0 12px 1px 0;
  list-style: none;
`;
const SuggestItem = styled.li<{ $on?: boolean }>`
  height: 17px;
  display: flex;
  align-items: center;
  gap: 2px;
  padding: 0 2px;
  font: 11px/17px ${MONO};
  color: #f4f4f5;
  ${(q) => q.$on && css`background: linear-gradient(#9ab4de, #5f81b8);`}
`;
const SuggestThumb = styled.span`
  position: absolute;
  right: 4px;
  top: 2px;
  width: 4px;
  height: 74px;
  border-radius: 2px;
  background: #c4c4c6;
`;
const Category = styled.button`
  width: 100%;
  height: 16px;
  display: flex;
  align-items: center;
  gap: 3px;
  padding: 0 4px 0 2px;
  border-top: 1px solid #2e2e30;
  background: #525254;
  font: 11px/15px ${MONO};
  color: #98989a;
`;
const Hint = styled.div`
  position: absolute;
  left: 159px;
  bottom: 109px;
  width: 94px;
  height: 60px;
  background: #f0eff2;
  border: 1px solid #c2c2c5;
  font: 9px/12px ${CJK};
  color: #555;
`;
const HintTitle = styled.p`
  margin: 0 0 4px;
  height: 22px;
  padding: 5px 4px 0;
  border-bottom: 1px solid #cfcfd2;
  color: #777;
`;
const HintRow = styled.p`
  margin: 0 0 5px;
  padding: 0 4px;
  display: flex;
  align-items: center;
  gap: 4px;
  font-weight: 500;
  white-space: nowrap;
`;
const HintName = styled.b`
  font: 700 9px/12px ${UI};
`;
const Ime = styled.div`
  position: absolute;
  left: 149px;
  bottom: 64px;
  width: 72px;
  height: 21px;
  display: flex;
  align-items: center;
  justify-content: space-between;
  padding: 0 6px 0 5px;
  background: #fff;
  border: 1px solid #6aa6cf;
  color: #1d6cb5;
  font: 12px/16px ${CJK};
`;
const Pointer = styled.svg`
  position: absolute;
  left: 166px;
  bottom: 162px;
  width: 140px;
  height: 130px;
  pointer-events: none;
`;
const Brand = styled.div`
  position: absolute;
  right: 49px;
  bottom: 11px;
  width: 180px;
  height: 84px;
  display: flex;
  align-items: center;
  gap: 12px;
  padding-left: 14px;
  background: #223057;
  color: #d3d6df;
`;
const BrandName = styled.strong`
  display: block;
  font: 700 26px/30px ${CJK};
`;
const BrandUrl = styled.span`
  display: block;
  font: 12px/13px "DejaVu Sans", sans-serif;
  white-space: nowrap;
`;

const menus = ["文件(F)", "编辑(E)", "视图(V)", "插入(I)", "格式(O)", "工具(T)", "绘图(D)", "标注(N)", "修改(M)", "参数(P)", "窗口(W)", "帮助(H)"];

const palette: { h: number; rule?: boolean; items: [string, string][] }[] = [
  { h: 23, rule: true, items: [["tri", "设 置"], ["tridown", "轴网柱子"]] },
  { h: 66, rule: true, items: [["hash", "绘制轴网"], ["walls", "墙生轴网"], ["addaxis", "添加轴线"], ["wcut", "轴线裁剪"], ["merge", "轴网合并"], ["retype", "轴改线型"]] },
  { h: 75, rule: true, items: [["axis1", "轴网标注"], ["axis1", "单轴标注"], ["addaxis", "添补轴号"], ["axis2", "删除轴号"], ["blues", "一轴多号"], ["node", "轴号隐现"], ["node", "主附转换"]] },
  { h: 44, items: [["column", "标 准 柱"], ["corner", "角 柱"], ["corner", "构 造 柱"], ["align", "柱齐墙边"]] },
  {
    h: 168,
    items: ["墙 体", "门 窗", "房间屋顶", "楼梯其他", "立 面", "剖 面", "文字表格", "尺寸标注", "符号标注", "图层控制", "工 具", "三维建模", "图块图案", "文件布图", "其 它", "帮助演示"].map(
      (t) => ["tri", t] as [string, string]
    ),
  },
];

const styles: [string, string, number, number][] = [
  ["textstyle", "Standard", 84, 11],
  ["dimstyle", "STANDARD", 90, 13],
  ["tablestyle", "Standard", 82, 1],
  ["leader", "Standard", 83, 12],
];

const suggestions: [string, string][] = [
  ["plinePale", "PL (PLINE)"],
  ["printPale", "PLOT"],
  ["plan", "PLAN"],
  ["surf", "PLANESURF"],
  ["plotmgr", "PLOTTERMANAGER"],
  ["stamp", "PLOTSTAMP"],
  ["stylep", "PLOTSTYLE"],
];

const minor = [15, 29, 44, 59, 88, 103, 118, 132];
const major = [0, 73];
const stroke = (list: number[]) => list.map((n) => `M${n + 0.5} 0V147M0 ${n + 0.5}H147`).join("");

export default function App() {
  return (
    <>
      <GlobalStyle />
      <Desktop>
        <LeftEdge />
        <Window>
          <Head>
            <LogoButton aria-label="应用程序菜单">
              <svg width="20" height="18" viewBox="0 0 20 18">
                <path d="M1 14L6.5 2h2.5l5 12-3.5-1.5-2.5-5-2 4z" fill="#b5201b" />
                <path d="M6.5 2H9l5 12-3.5-1.5z" fill="#8e1512" />
                <path d="M1 14l3.5-2.5h5L14 14l-4-.5H5z" fill="#e0574c" />
                <path d="M16 9h4l-2 2z" fill="#222" />
              </svg>
            </LogoButton>
            <TitleRow>
              <QuickAccess>
                {["page", "open", "save", "saveas", "print", "undo"].map((x) => (
                  <QuickButton key={x} aria-label={x}><Icon name={x} s={13} /></QuickButton>
                ))}
                <QuickButton $w={9} aria-label="undo list"><Icon name="down" s={8} /></QuickButton>
                <QuickButton aria-label="redo"><Icon name="redo" s={13} /></QuickButton>
                <QuickButton $w={9} aria-label="redo list"><Icon name="down" s={8} /></QuickButton>
                <Workspace>
                  <Icon name="gear" />
                  <Choice aria-label="工作空间"><option>自定义</option></Choice>
                  <Icon name="down" s={10} />
                </Workspace>
                <QuickButton $w={12} aria-label="customize">
                  <svg width="7" height="8" viewBox="0 0 7 8"><path d="M1 1h5v1H1zM1 3h5L3.5 6.5z" fill="#222" /></svg>
                </QuickButton>
              </QuickAccess>
              <Title>Drawing1.dwg</Title>
              <SearchArrow aria-label="展开">
                <svg width="6" height="8" viewBox="0 0 6 8"><path d="M1 1l4 3-4 3z" fill="#111" /></svg>
              </SearchArrow>
              <Search aria-label="搜索" placeholder="键入关键字或短语" />
              <Account>
                <PlainButton aria-label="查找"><Icon name="binoc" s={13} /></PlainButton>
                <PlainButton aria-label="用户"><Icon name="person" s={13} /></PlainButton>
                <Login>登录</Login>
                <Icon name="down" s={7} />
                <PlainButton aria-label="exchange"><Icon name="exchange" s={13} /></PlainButton>
                <PlainButton aria-label="360"><Icon name="cloudlock" s={12} /></PlainButton>
                <Icon name="down" s={7} />
                <PlainButton aria-label="帮助"><Icon name="question" s={13} /></PlainButton>
                <Icon name="down" s={7} />
              </Account>
              <WindowButtons>
                <PlainButton aria-label="最小化">
                  <svg width="9" height="9" viewBox="0 0 9 9"><path d="M1 4.5h7" stroke="#999" /></svg>
                </PlainButton>
                <PlainButton aria-label="最大化">
                  <svg width="9" height="9" viewBox="0 0 9 9"><path d="M1.5 1.5h6v6h-6z" stroke="#999" fill="none" /></svg>
                </PlainButton>
                <PlainButton aria-label="关闭">
                  <svg width="9" height="9" viewBox="0 0 9 9"><path d="M1 1l7 7M8 1L1 8" stroke="#999" /></svg>
                </PlainButton>
              </WindowButtons>
            </TitleRow>
            <MenuRow>
              {menus.map((m) => <MenuLink key={m}>{m}</MenuLink>)}
              <ChildControls>
                <PlainButton aria-label="窗口控制">
                  <svg width="28" height="10" viewBox="0 0 28 10">
                    <path d="M2 8h6" stroke="#222" strokeWidth="1.5" />
                    <path d="M11.5 4.5h5v4h-5zM13.5 4V1.5h4.5v5h-1" stroke="#222" fill="none" />
                    <path d="M22 2l4 6M26 2l-4 6" stroke="#222" strokeWidth="1.5" />
                  </svg>
                </PlainButton>
              </ChildControls>
            </MenuRow>
          </Head>
          <TabRow>
            <Tab>
              <span>Drawing1*</span>
              <svg width="7" height="7" viewBox="0 0 7 7"><path d="M1 1l5 5M6 1L1 6" stroke="#888" /></svg>
            </Tab>
            <NewTab aria-label="新建">
              <svg width="18" height="13" viewBox="0 0 18 13">
                <path d="M1 3q0-2 2-2h8q2 0 3 2l3 7q0 2-2 2H8Q5 12 4 9z" fill="#838385" stroke="#5c5c5e" />
                <path d="M9 4v5M6.5 6.5h5" stroke="#6c6c6e" />
              </svg>
            </NewTab>
          </TabRow>
          <Bars>
            <BarRow>
              <Panel $w={365}>
                <ToolSet names="page open save|print preview publish globe|cut copy paste match block|undo down redo down|hand zoom zoomwin zoomprev|props grid4 palette sheet markup calc|help" />
              </Panel>
              <Panel $w={340}>
                {styles.map(([ic, t, w, ind], i) => (
                  <Field key={i} $w={w}>
                    <Icon name={ic} />
                    <Choice $indent={ind} aria-label={ic}><option>{t}</option></Choice>
                    <Chevron />
                  </Field>
                ))}
              </Panel>
              <Panel $w={265}>
                <ToolSet names="hash axis1 axis2 trim|ibeam wall stairs doors arcdoor column|dim1 dim2 dim3|rail arrows arrows2 dial elev loop" />
              </Panel>
            </BarRow>
            <BarRow>
              <Panel $w={126}>
                <Field $w={99}>
                  <Choice $indent={4} aria-label="工作空间"><option>自定义</option></Choice>
                  <Chevron />
                </Field>
                <ToolSet names="gear gearbox" />
              </Panel>
              <Panel $w={227}>
                <ToolSet names="layers" />
                <Field $w={173}>
                  <Icon name="bulb" s={11} />
                  <Icon name="sun" s={10} />
                  <Icon name="vp" s={9} />
                  <Icon name="lock" s={10} />
                  <Icon name="box" s={9} />
                  <Choice aria-label="图层"><option>0</option></Choice>
                  <Chevron />
                </Field>
                <Tools $n={3}>
                  <Tool aria-label="stack"><Icon name="stack" /></Tool>
                  <Tool aria-label="stack2"><Icon name="stack2" /></Tool>
                  <Tool aria-label="stack3"><Icon name="stack3" /></Tool>
                </Tools>
              </Panel>
              <Panel $w={329}>
                <Field $w={87}>
                  <Icon name="box" s={8} />
                  <Choice $mono aria-label="颜色"><option>ByLayer</option></Choice>
                  <Chevron />
                </Field>
                <Field $w={97}>
                  <Rule $w={34} />
                  <Choice $mono aria-label="线型"><option>ByLayer</option></Choice>
                  <Chevron />
                </Field>
                <Field $w={76}>
                  <Rule $w={18} />
                  <Choice $mono aria-label="线宽"><option>ByLayer</option></Choice>
                  <Chevron />
                </Field>
                <Field $w={69}>
                  <Choice $mono $dim $indent={4} disabled aria-label="打印样式"><option>ByColor</option></Choice>
                  <Chevron c="#bbb" />
                </Field>
              </Panel>
              <Panel $w={278}>
                <ToolSet names="doc docy drum hash column tee redstack redwin bluewin portal bluehouse yellow gate slope book table cup efont adot target ball" />
              </Panel>
            </BarRow>
          </Bars>
          <Body>
            <SidePalette>
              <PaletteTitle>天正...</PaletteTitle>
              {palette.map((g, i) => (
                <PaletteGroup key={i} $h={g.h} $rule={g.rule}>
                  {g.items.map(([ic, t]) => (
                    <li key={t}>
                      <PaletteItem>
                        <Icon name={ic} s={ic.startsWith("tri") ? 9 : 10} />
                        <Spread>{t}</Spread>
                      </PaletteItem>
                    </li>
                  ))}
                </PaletteGroup>
              ))}
            </SidePalette>
            <Right>
              <Upper>
                <Gutter $w={19}>
                  <ToolColumn $h={253}>
                    <ToolSet col names="line xline pline poly rect arc circle cloud spline ellipse earc insert mkblock point hatch hatch region tbl bigA add" />
                  </ToolColumn>
                  <ToolColumn $h={83}>
                    <ToolSet col names="flash flash2 dots|lockcurve|eye rays" />
                  </ToolColumn>
                </Gutter>
                <CanvasArea>
                  <Drawing>
                    <Grid>
                      <defs>
                        <pattern id="g" x="41" y="34" width="147" height="147" patternUnits="userSpaceOnUse">
                          <path d={stroke(minor)} stroke="#101011" />
                          <path d={stroke(major)} stroke="#222224" />
                        </pattern>
                      </defs>
                      <rect width="100%" height="100%" fill="url(#g)" />
                      <path d="M261.5 0V420" stroke="#343436" />
                      <path d="M322 176.5h56M350.5 149v56" stroke="#bdbdbd" />
                      <rect x="348.5" y="174.5" width="4" height="4" stroke="#cfcfcf" fill="#666" />
                      <path d="M421 408v-1h22v1" stroke="#888" fill="none" />
                    </Grid>
                    <Compass>
                      <Ring viewBox="0 0 80 80">
                        <circle cx="40" cy="38" r="31" fill="none" stroke="#343436" strokeWidth="8" />
                        <rect x="26" y="23" width="29" height="29" fill="#b3b3b4" stroke="#9a9a9b" />
                        <g fill="#a9a9aa" fontFamily={CJK} fontSize="11" textAnchor="middle">
                          <text x="40" y="10">北</text>
                          <text x="40" y="76">南</text>
                          <text x="8" y="43">西</text>
                          <text x="73" y="43">东</text>
                        </g>
                        <text x="40" y="44" fill="#626264" fontFamily={CJK} fontSize="18" textAnchor="middle">上</text>
                      </Ring>
                      <WcsButton>WCS</WcsButton>
                    </Compass>
                    <NavBar>
                      <svg width="17" height="122" viewBox="0 0 17 122" stroke="#2c2c2d" fill="none">
                        <circle cx="9" cy="18" r="5" />
                        <circle cx="9" cy="18" r="2" />
                        <path d="M4 42l4-3 4 4-3 5-5-2zM4 60l8-7M5 53l6 8M8 72v16M3 80h11M5 77l-2 3 2 3M12 77l2 3-2 3M3 100h8v9H3zM6 97h8v9" />
                      </svg>
                    </NavBar>
                    <Lump />
                  </Drawing>
                  <VScroll>
                    <svg width="9" height="7" viewBox="0 0 9 7"><path d="M1.5 5l3-3 3 3" stroke="#444" strokeWidth="1.3" fill="none" /></svg>
                    <Thumb />
                    <svg width="9" height="7" viewBox="0 0 9 7"><path d="M1.5 2l3 3 3-3" stroke="#444" strokeWidth="1.3" fill="none" /></svg>
                  </VScroll>
                  <HScroll>
                    <Splitter />
                    <svg width="5" height="7" viewBox="0 0 5 7"><path d="M4 1L1.5 3.5 4 6" stroke="#444" fill="none" /></svg>
                    <Spacer />
                    <svg width="7" height="7" viewBox="0 0 7 7"><path d="M2 1l2.5 2.5L2 6" stroke="#444" fill="none" /></svg>
                  </HScroll>
                </CanvasArea>
                <Gutter $w={18}>
                  <ToolColumn $h={229}>
                    <ToolSet col names="pen copyobj mirror offset array move rotate scale stretch trimline extend brk brk2 join chamfer fillet blend explode" />
                  </ToolColumn>
                  <ToolColumn $h={79}>
                    <ToolSet col names="order1 order2 order3 order4|order5 order1" />
                  </ToolColumn>
                </Gutter>
              </Upper>
              <Command>
                <CommandHandle>
                  <svg width="8" height="8" viewBox="0 0 8 8"><path d="M1 1l6 6M7 1L1 7" stroke="#eee" strokeWidth="1.5" /></svg>
                  <Icon name="wrench" s={9} />
                </CommandHandle>
                <History>)/放弃(U)/宽度(W)]: *取消*</History>
                <Prompt>
                  <Icon name="prompt" s={11} />
                  <Icon name="down" s={6} />
                  <PromptInput aria-label="命令" defaultValue="PL" />
                </Prompt>
              </Command>
            </Right>
          </Body>
          <Status>
            <ScaleButton>比例 1:100<Icon name="down" s={8} /></ScaleButton>
            <Coords>236836, 1184094, 0</Coords>
            <Toggles $w={190}>
              {["snap", "ortho", "grid4", "ucs", "polar", "osnap", "box", "angle", "ucs", "lwt", "plus", "fillsq", "sq", "sel", "cross"].map((x, i) => (
                <Toggle key={i} aria-label={x} $on={[2, 3, 5, 8, 11].includes(i)}><Icon name={x} s={11} /></Toggle>
              ))}
            </Toggles>
            <Spacer />
            <WordButton>模型</WordButton>
            <Toggles $w={26}>
              <Toggle aria-label="布局"><Icon name="layoutA" s={11} /></Toggle>
              <Toggle aria-label="快速查看"><Icon name="layoutB" s={11} /></Toggle>
            </Toggles>
            <Toggles $w={14} />
            <Icon name="anno" s={11} />
            <WordButton>1:1</WordButton>
            <Icon name="down" s={8} />
            <Toggles $w={64}>
              <Toggle aria-label="注释可见性"><Icon name="annoY" s={11} /></Toggle>
              <Toggle aria-label="自动缩放"><Icon name="anno" s={11} /></Toggle>
              <Toggle aria-label="工作空间"><Icon name="gear" s={10} /></Toggle>
              <Toggle aria-label="锁定"><Icon name="unlock" s={11} /></Toggle>
              <Toggle aria-label="隔离"><Icon name="ellipse" s={10} /></Toggle>
            </Toggles>
            <WordButton $on>编组</WordButton>
            <WordButton>基线</WordButton>
            <WordButton>填充</WordButton>
            <WordButton>加粗</WordButton>
            <WordButton>动态标注</WordButton>
            <Toggles $w={60}>
              <Toggle aria-label="图形状态"><Icon name="flag" s={11} /></Toggle>
              <Toggle aria-label="提示"><Icon name="bulb" s={11} /></Toggle>
              <Toggle aria-label="更多"><Icon name="down" s={8} /></Toggle>
              <Toggle aria-label="全屏"><Icon name="win" s={11} /></Toggle>
              <Icon name="resize" s={11} />
            </Toggles>
          </Status>

          <Suggest>
            <SuggestList>
              {suggestions.map(([ic, t], i) => (
                <SuggestItem key={t} $on={i === 0}>
                  <Icon name={ic} />
                  {t}
                  {i === 0 && (
                    <>
                      <Spacer />
                      <Icon name="question" />
                      <Icon name="eye" />
                    </>
                  )}
                </SuggestItem>
              ))}
            </SuggestList>
            <SuggestThumb />
            <Category><Icon name="gearPale" s={11} />PLINEWID<Spacer />+</Category>
            <Category><Icon name="bars" s={11} />图案填充: PLAST<Spacer />+</Category>
          </Suggest>
          <Hint role="tooltip">
            <HintTitle>创建二维多段线</HintTitle>
            <HintRow>
              <svg width="12" height="11" viewBox="0 0 12 11">
                <path d="M0 0h12v11H0z" fill="#222" />
                <path d="M1 1h10v5H1z" fill="#f2ee8f" />
                <path d="M1 7h6v3H1z" fill="#3b5f9a" />
              </svg>
              <HintName>PLINE</HintName>
            </HintRow>
            <HintRow>按 F1 键获得更多帮助</HintRow>
          </Hint>
          <Pointer viewBox="0 0 140 130">
            <path d="M135 1L20 114l-4-4z" fill="#d9382f" />
            <path d="M4 125l7-14 3 1 5 5-1 3z" fill="#e0443b" />
          </Pointer>
          <Ime>
            <span>英</span>
            <svg width="11" height="12" viewBox="0 0 11 12"><path d="M7 1q3 7-6 8 4 4 8 0t-2-8z" fill="#1d6cb5" /></svg>
            <svg width="7" height="10" viewBox="0 0 7 10"><circle cx="2" cy="3" r="1.2" fill="#1d6cb5" /><path d="M5 4q1.5 2-.5 4" stroke="#1d6cb5" strokeWidth="1.5" fill="none" /></svg>
            <svg width="13" height="13" viewBox="0 0 12 12">
              <circle cx="6" cy="6" r="3.3" fill="none" stroke="#1d6cb5" strokeWidth="1.3" />
              <circle cx="6" cy="6" r="4.8" fill="none" stroke="#1d6cb5" strokeWidth="1.6" strokeDasharray="1.9 1.87" />
            </svg>
          </Ime>
          <Brand>
            <svg width="36" height="38" viewBox="0 0 36 38" fill="none" stroke="#d3d6df" strokeLinecap="round" strokeLinejoin="round">
              <path d="M3 6v23q0 7 7 6l5-2" strokeWidth="3" />
              <path d="M9 27V8q0-6 6-4l15 8q7 5 1 11L15 32q-6 2-6-5z" strokeWidth="3" />
              <path d="M16 14v9l7-4.5z" fill="#d3d6df" strokeWidth="0.5" />
              <path d="M25.5 16v6" strokeWidth="1.5" />
            </svg>
            <div>
              <BrandName>溜溜自学</BrandName>
              <BrandUrl>zixue.3D66.COM</BrandUrl>
            </div>
          </Brand>
        </Window>
        <RightEdge />
        <BottomEdge />
      </Desktop>
    </>
  );
}
